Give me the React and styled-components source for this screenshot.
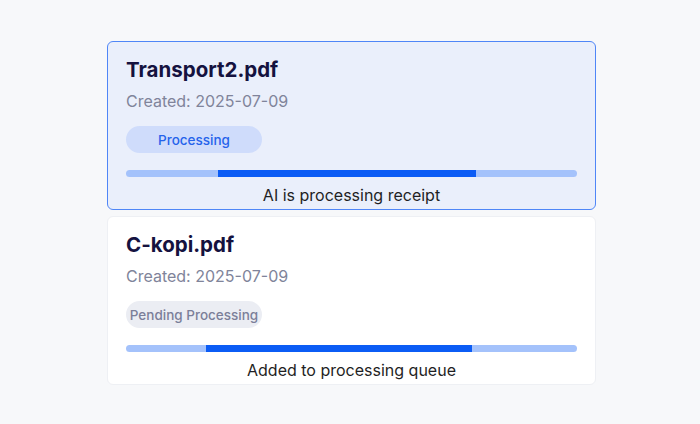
import styled, { createGlobalStyle } from "styled-components";

const Global = createGlobalStyle`
  body {
    margin: 0;
    background: #f7f8fa;
    font-family: Inter, "Noto Sans", sans-serif;
  }
`;

const receipts = [
  {
    name: "Transport2.pdf",
    created: "2025-07-09",
    status: "Processing",
    message: "AI is processing receipt",
    active: true,
    barStart: 92,
    barEnd: 350,
  },
  {
    name: "C-kopi.pdf",
    created: "2025-07-09",
    status: "Pending Processing",
    message: "Added to processing queue",
    active: false,
    barStart: 80,
    barEnd: 346,
  },
];

export default function App() {
  return (
    <>
      <Global />
      <Page>
        <List>
          {receipts.map((r) => (
            <Card key={r.name} $active={r.active}>
              <Title>{r.name}</Title>
              <Created>Created: {r.created}</Created>
              <Badge $active={r.active}>{r.status}</Badge>
              <Track>
                <Fill style={{ left: r.barStart, width: r.barEnd - r.barStart }} />
              </Track>
              <Message>{r.message}</Message>
            </Card>
          ))}
        </List>
      </Page>
    </>
  );
}

const Page = styled.div`
  width: 700px;
  height: 424px;
  display: flex;
  justify-content: center;
  padding: 41px 0 0 3px;
  box-sizing: border-box;
`;

const List = styled.div`
  width: 489px;
  display: flex;
  flex-direction: column;
  gap: 6px;
`;

const Card = styled.div`
  border: 1px solid ${(p) => (p.$active ? "#4f86f7" : "#eef0f4")};
  background: ${(p) => (p.$active ? "#eaeffb" : "#ffffff")};
  border-radius: 6px;
  padding: 14px 18px 3px;
  display: flex;
  flex-direction: column;
  align-items: flex-start;
`;

const Title = styled.div`
  font-size: 20.5px;
  line-height: 28px;
  font-weight: 700;
  color: #15123f;
`;

const Created = styled.div`
  margin-top: 7px;
  font-size: 16px;
  line-height: 20px;
  color: #80849a;
`;

const Badge = styled.div`
  margin-top: 15px;
  width: 136px;
  height: 27px;
  border-radius: 14px;
  display: flex;
  align-items: center;
  justify-content: center;
  font-size: 13.5px;
  font-weight: 500;
  background: ${(p) => (p.$active ? "#cfdcfb" : "#ebedf3")};
  color: ${(p) => (p.$active ? "#2563eb" : "#7b7f99")};
`;

const Track = styled.div`
  position: relative;
  margin-top: 17px;
  align-self: stretch;
  height: 7px;
  border-radius: 4px;
  background: #a4c2fb;
  overflow: hidden;
`;

const Fill = styled.div`
  position: absolute;
  top: 0;
  bottom: 0;
  background: #0b5cf5;
`;

const Message = styled.div`
  align-self: stretch;
  text-align: center;
  margin-top: 7px;
  font-size: 16px;
  line-height: 22px;
  color: #1f1f24;
`;
